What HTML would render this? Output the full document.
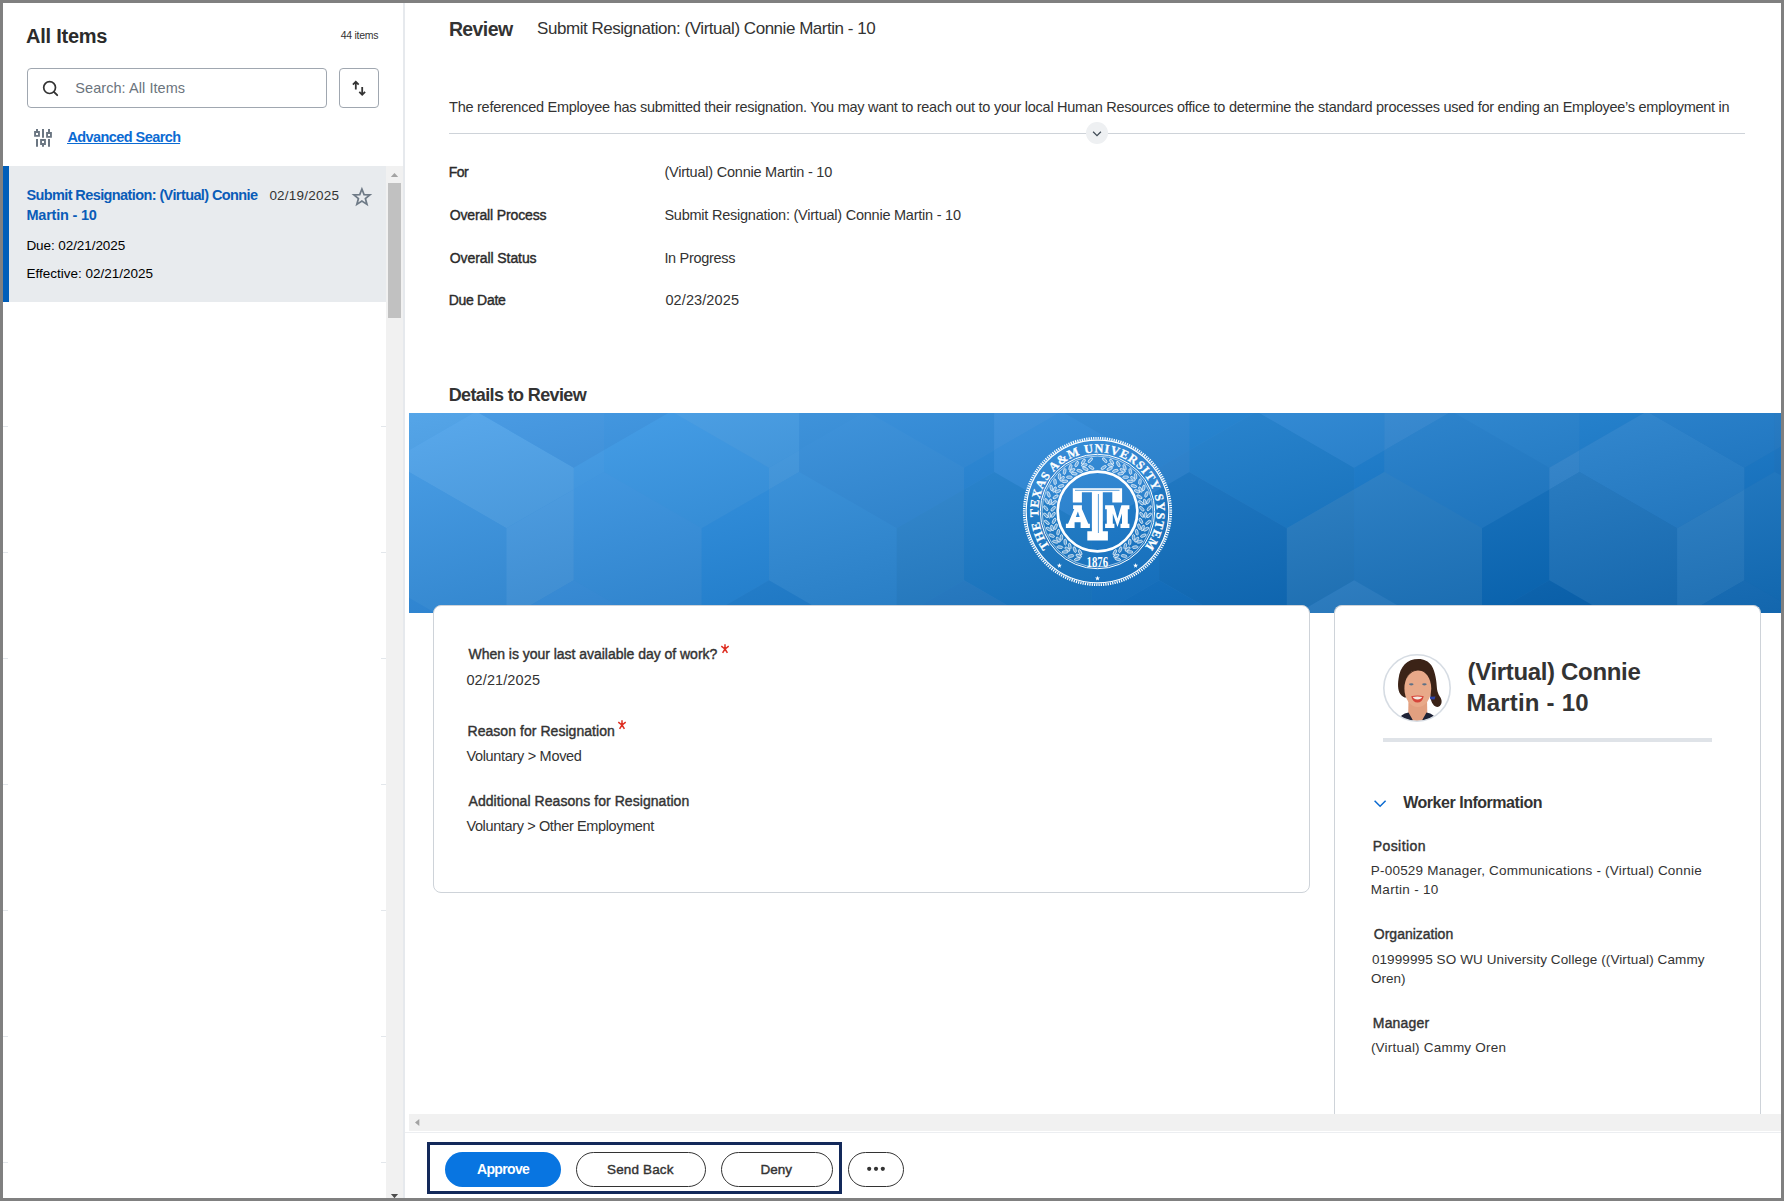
<!DOCTYPE html>
<html><head><meta charset="utf-8"><title>Review</title>
<style>
html,body{margin:0;padding:0}
body{width:1784px;height:1201px;overflow:hidden;background:#808080;position:relative;font-family:"Liberation Sans",sans-serif}
.a{position:absolute}
.t{position:absolute;white-space:nowrap}
</style></head><body>
<div class="a" style="left:3px;top:3px;width:1778px;height:1195px;background:#fff"></div>
<!-- search box -->
<div class="a" style="left:27px;top:68px;width:300px;height:40px;box-sizing:border-box;border:1px solid #a0a7b0;border-radius:4px;background:#fff"></div>
<svg class="a" style="left:40px;top:78px" width="20" height="20" viewBox="0 0 20 20"><circle cx="9.6" cy="9.6" r="5.9" fill="none" stroke="#333" stroke-width="1.7"/><line x1="13.9" y1="13.9" x2="17.2" y2="17.2" stroke="#333" stroke-width="1.9" stroke-linecap="round"/></svg>
<!-- sort button -->
<div class="a" style="left:339px;top:68px;width:40px;height:40px;box-sizing:border-box;border:1px solid #a0a7b0;border-radius:4px;background:#fff"></div>
<svg class="a" style="left:349px;top:78px" width="20" height="20" viewBox="0 0 20 20" fill="none" stroke="#333" stroke-width="1.8" stroke-linecap="butt" stroke-linejoin="miter"><path d="M6.8 3.6 V11.5 M3.9 6.6 L6.8 3.7 L9.7 6.6"/><path d="M13.2 9 V16.9 M10.3 13.9 L13.2 16.8 L16.1 13.9"/></svg>
<!-- advanced search icon -->
<svg class="a" style="left:30px;top:125px" width="28" height="26" viewBox="0 0 28 26" fill="#6b7682"><path d="M6 4h2v2h-2z M4.1 6h5.8v5.8h-5.8z M6 14h2v7.8h-2z M12 4h2v8.8h-2z M10.1 14.1h5.8v5.8h-5.8z M12 19.8h2v2h-2z M18 4h2v3h-2z M16.1 7h5.8v5.8h-5.8z M18 14h2v7.8h-2z"/><path d="M6 8h2v2h-2z M12 16h2v2h-2z M18 9h2v2h-2z" fill="#fff"/></svg>
<div class="a" style="left:67px;top:142.6px;width:113.2px;height:1.4px;background:#0b6bd3"></div>
<!-- selected item -->
<div class="a" style="left:3px;top:166px;width:383px;height:136px;background:#e8ebee"></div>
<div class="a" style="left:3px;top:166px;width:6px;height:136px;background:#005eb9"></div>
<svg class="a" style="left:348px;top:182px" width="28" height="28" viewBox="0 0 28 28"><path transform="translate(13.9 15.1) scale(0.88) translate(-14 -14.5)" d="M14 5.3 L16.45 11.6 L23.2 11.95 L17.95 16.2 L19.75 22.8 L14 19.05 L8.25 22.8 L10.05 16.2 L4.8 11.95 L11.55 11.6 Z" fill="none" stroke="#6e7a86" stroke-width="1.95" stroke-linejoin="miter"/></svg>
<!-- scrollbar -->
<div class="a" style="left:386px;top:166px;width:17px;height:1032px;background:#f1f1f1"></div>
<svg class="a" style="left:386px;top:166px" width="17" height="17"><path d="M4.8 11 L8.5 6.9 L12.2 11 Z" fill="#a3a3a3"/></svg>
<div class="a" style="left:388px;top:183px;width:13px;height:135px;background:#c1c1c1"></div>
<svg class="a" style="left:386px;top:1181px" width="17" height="17"><path d="M4.9 13 L12.1 13 L8.5 17.2 Z" fill="#4d4d4d"/></svg>
<!-- separator -->
<div class="a" style="left:403px;top:3px;width:2px;height:1195px;background:#e6e9ed"></div>

<div class="a" style="left:3px;top:426px;width:5px;height:1px;background:#e3e7eb"></div>
<div class="a" style="left:381px;top:426px;width:5px;height:1px;background:#e3e7eb"></div>
<div class="a" style="left:3px;top:552px;width:5px;height:1px;background:#e3e7eb"></div>
<div class="a" style="left:381px;top:552px;width:5px;height:1px;background:#e3e7eb"></div>
<div class="a" style="left:3px;top:658px;width:5px;height:1px;background:#e3e7eb"></div>
<div class="a" style="left:381px;top:658px;width:5px;height:1px;background:#e3e7eb"></div>
<div class="a" style="left:3px;top:784px;width:5px;height:1px;background:#e3e7eb"></div>
<div class="a" style="left:381px;top:784px;width:5px;height:1px;background:#e3e7eb"></div>
<div class="a" style="left:3px;top:910px;width:5px;height:1px;background:#e3e7eb"></div>
<div class="a" style="left:381px;top:910px;width:5px;height:1px;background:#e3e7eb"></div>
<div class="a" style="left:3px;top:1036px;width:5px;height:1px;background:#e3e7eb"></div>
<div class="a" style="left:381px;top:1036px;width:5px;height:1px;background:#e3e7eb"></div>
<div class="a" style="left:3px;top:1162px;width:5px;height:1px;background:#e3e7eb"></div>
<div class="a" style="left:381px;top:1162px;width:5px;height:1px;background:#e3e7eb"></div>
<div class="a" style="left:449px;top:133px;width:1296px;height:1px;background:#ced3d9"></div>
<div class="a" style="left:1086px;top:122px;width:22px;height:22px;border-radius:50%;background:#eef0f2"></div>
<svg class="a" style="left:1086px;top:122px" width="22" height="22"><path d="M7.1 9.8 L11 13.7 L14.9 9.8" fill="none" stroke="#3f4a55" stroke-width="1.25"/></svg>

<div class="a" style="left:409px;top:413px;width:1372px;height:200px;overflow:hidden;background:linear-gradient(167deg,#58a7e8 0%,#3d90da 30%,#2677c4 60%,#1363ae 100%)">
<svg width="1372" height="200" viewBox="409 413 1372 200" style="position:absolute;left:0;top:0"><defs><linearGradient id="bg0" gradientUnits="userSpaceOnUse" x1="1031.3" y1="257.3" x2="1158.7" y2="768.7"><stop offset="0" stop-color="#4ba0e9"/><stop offset="1" stop-color="#0e61a9"/></linearGradient><linearGradient id="g0" gradientUnits="userSpaceOnUse" x1="1031.3" y1="257.3" x2="1158.7" y2="768.7"><stop offset="0" stop-color="#55a5e8"/><stop offset="1" stop-color="#1865a8"/></linearGradient><linearGradient id="g1" gradientUnits="userSpaceOnUse" x1="1031.3" y1="257.3" x2="1158.7" y2="768.7"><stop offset="0" stop-color="#5aa9ec"/><stop offset="1" stop-color="#1d6aab"/></linearGradient><linearGradient id="g2" gradientUnits="userSpaceOnUse" x1="1031.3" y1="257.3" x2="1158.7" y2="768.7"><stop offset="0" stop-color="#4c9de5"/><stop offset="1" stop-color="#0f5ea5"/></linearGradient><linearGradient id="g3" gradientUnits="userSpaceOnUse" x1="1031.3" y1="257.3" x2="1158.7" y2="768.7"><stop offset="0" stop-color="#4fa4ec"/><stop offset="1" stop-color="#1265ac"/></linearGradient><linearGradient id="g4" gradientUnits="userSpaceOnUse" x1="1031.3" y1="257.3" x2="1158.7" y2="768.7"><stop offset="0" stop-color="#489ce5"/><stop offset="1" stop-color="#0b5da5"/></linearGradient><linearGradient id="g5" gradientUnits="userSpaceOnUse" x1="1031.3" y1="257.3" x2="1158.7" y2="768.7"><stop offset="0" stop-color="#4ba3ec"/><stop offset="1" stop-color="#0e64ac"/></linearGradient><linearGradient id="g6" gradientUnits="userSpaceOnUse" x1="1031.3" y1="257.3" x2="1158.7" y2="768.7"><stop offset="0" stop-color="#53a6eb"/><stop offset="1" stop-color="#1667aa"/></linearGradient><linearGradient id="g7" gradientUnits="userSpaceOnUse" x1="1031.3" y1="257.3" x2="1158.7" y2="768.7"><stop offset="0" stop-color="#55a7eb"/><stop offset="1" stop-color="#1868ab"/></linearGradient><linearGradient id="g8" gradientUnits="userSpaceOnUse" x1="1031.3" y1="257.3" x2="1158.7" y2="768.7"><stop offset="0" stop-color="#4a9ee6"/><stop offset="1" stop-color="#0c5fa6"/></linearGradient><linearGradient id="g9" gradientUnits="userSpaceOnUse" x1="1031.3" y1="257.3" x2="1158.7" y2="768.7"><stop offset="0" stop-color="#4b9fe7"/><stop offset="1" stop-color="#0e60a7"/></linearGradient><linearGradient id="g10" gradientUnits="userSpaceOnUse" x1="1031.3" y1="257.3" x2="1158.7" y2="768.7"><stop offset="0" stop-color="#479de7"/><stop offset="1" stop-color="#0a5ea7"/></linearGradient><linearGradient id="g11" gradientUnits="userSpaceOnUse" x1="1031.3" y1="257.3" x2="1158.7" y2="768.7"><stop offset="0" stop-color="#419be7"/><stop offset="1" stop-color="#045ca7"/></linearGradient><linearGradient id="g12" gradientUnits="userSpaceOnUse" x1="1031.3" y1="257.3" x2="1158.7" y2="768.7"><stop offset="0" stop-color="#52a4ed"/><stop offset="1" stop-color="#1565ad"/></linearGradient><linearGradient id="g13" gradientUnits="userSpaceOnUse" x1="1031.3" y1="257.3" x2="1158.7" y2="768.7"><stop offset="0" stop-color="#4ca2ed"/><stop offset="1" stop-color="#0e63ad"/></linearGradient><linearGradient id="g14" gradientUnits="userSpaceOnUse" x1="1031.3" y1="257.3" x2="1158.7" y2="768.7"><stop offset="0" stop-color="#489ee8"/><stop offset="1" stop-color="#0b5fa8"/></linearGradient><linearGradient id="g15" gradientUnits="userSpaceOnUse" x1="1031.3" y1="257.3" x2="1158.7" y2="768.7"><stop offset="0" stop-color="#499de6"/><stop offset="1" stop-color="#0c5ea6"/></linearGradient><linearGradient id="g16" gradientUnits="userSpaceOnUse" x1="1031.3" y1="257.3" x2="1158.7" y2="768.7"><stop offset="0" stop-color="#3f9ce8"/><stop offset="1" stop-color="#025da7"/></linearGradient><linearGradient id="g17" gradientUnits="userSpaceOnUse" x1="1031.3" y1="257.3" x2="1158.7" y2="768.7"><stop offset="0" stop-color="#409be5"/><stop offset="1" stop-color="#035ca5"/></linearGradient><linearGradient id="g18" gradientUnits="userSpaceOnUse" x1="1031.3" y1="257.3" x2="1158.7" y2="768.7"><stop offset="0" stop-color="#4ba3ed"/><stop offset="1" stop-color="#0e63ac"/></linearGradient><linearGradient id="g19" gradientUnits="userSpaceOnUse" x1="1031.3" y1="257.3" x2="1158.7" y2="768.7"><stop offset="0" stop-color="#409dea"/><stop offset="1" stop-color="#035eaa"/></linearGradient><linearGradient id="g20" gradientUnits="userSpaceOnUse" x1="1031.3" y1="257.3" x2="1158.7" y2="768.7"><stop offset="0" stop-color="#55a7ed"/><stop offset="1" stop-color="#1867ad"/></linearGradient><linearGradient id="g21" gradientUnits="userSpaceOnUse" x1="1031.3" y1="257.3" x2="1158.7" y2="768.7"><stop offset="0" stop-color="#4aa1ea"/><stop offset="1" stop-color="#0d62aa"/></linearGradient><linearGradient id="g22" gradientUnits="userSpaceOnUse" x1="1031.3" y1="257.3" x2="1158.7" y2="768.7"><stop offset="0" stop-color="#4da5ed"/><stop offset="1" stop-color="#1065ad"/></linearGradient><linearGradient id="g23" gradientUnits="userSpaceOnUse" x1="1031.3" y1="257.3" x2="1158.7" y2="768.7"><stop offset="0" stop-color="#5bacf0"/><stop offset="1" stop-color="#1e6cb0"/></linearGradient><linearGradient id="g24" gradientUnits="userSpaceOnUse" x1="1031.3" y1="257.3" x2="1158.7" y2="768.7"><stop offset="0" stop-color="#46a3ee"/><stop offset="1" stop-color="#0963ae"/></linearGradient><linearGradient id="g25" gradientUnits="userSpaceOnUse" x1="1031.3" y1="257.3" x2="1158.7" y2="768.7"><stop offset="0" stop-color="#54aaf1"/><stop offset="1" stop-color="#176ab1"/></linearGradient><linearGradient id="g26" gradientUnits="userSpaceOnUse" x1="1031.3" y1="257.3" x2="1158.7" y2="768.7"><stop offset="0" stop-color="#4da5ef"/><stop offset="1" stop-color="#1065ae"/></linearGradient><linearGradient id="g27" gradientUnits="userSpaceOnUse" x1="1031.3" y1="257.3" x2="1158.7" y2="768.7"><stop offset="0" stop-color="#47a2ee"/><stop offset="1" stop-color="#0a63ae"/></linearGradient><linearGradient id="g28" gradientUnits="userSpaceOnUse" x1="1031.3" y1="257.3" x2="1158.7" y2="768.7"><stop offset="0" stop-color="#4fa3eb"/><stop offset="1" stop-color="#1264ab"/></linearGradient><linearGradient id="g29" gradientUnits="userSpaceOnUse" x1="1031.3" y1="257.3" x2="1158.7" y2="768.7"><stop offset="0" stop-color="#49a0ea"/><stop offset="1" stop-color="#0c61aa"/></linearGradient><linearGradient id="g30" gradientUnits="userSpaceOnUse" x1="1031.3" y1="257.3" x2="1158.7" y2="768.7"><stop offset="0" stop-color="#4da1e9"/><stop offset="1" stop-color="#1062a9"/></linearGradient><linearGradient id="g31" gradientUnits="userSpaceOnUse" x1="1031.3" y1="257.3" x2="1158.7" y2="768.7"><stop offset="0" stop-color="#469ce8"/><stop offset="1" stop-color="#095da8"/></linearGradient><linearGradient id="g32" gradientUnits="userSpaceOnUse" x1="1031.3" y1="257.3" x2="1158.7" y2="768.7"><stop offset="0" stop-color="#59a8ec"/><stop offset="1" stop-color="#1c69ac"/></linearGradient><linearGradient id="g33" gradientUnits="userSpaceOnUse" x1="1031.3" y1="257.3" x2="1158.7" y2="768.7"><stop offset="0" stop-color="#4ea3ec"/><stop offset="1" stop-color="#1164ac"/></linearGradient><linearGradient id="g34" gradientUnits="userSpaceOnUse" x1="1031.3" y1="257.3" x2="1158.7" y2="768.7"><stop offset="0" stop-color="#50a3ed"/><stop offset="1" stop-color="#1364ac"/></linearGradient><linearGradient id="g35" gradientUnits="userSpaceOnUse" x1="1031.3" y1="257.3" x2="1158.7" y2="768.7"><stop offset="0" stop-color="#439fec"/><stop offset="1" stop-color="#0660ac"/></linearGradient><linearGradient id="g36" gradientUnits="userSpaceOnUse" x1="1031.3" y1="257.3" x2="1158.7" y2="768.7"><stop offset="0" stop-color="#4da3eb"/><stop offset="1" stop-color="#1064aa"/></linearGradient><linearGradient id="g37" gradientUnits="userSpaceOnUse" x1="1031.3" y1="257.3" x2="1158.7" y2="768.7"><stop offset="0" stop-color="#409ae6"/><stop offset="1" stop-color="#035ba6"/></linearGradient><linearGradient id="g38" gradientUnits="userSpaceOnUse" x1="1031.3" y1="257.3" x2="1158.7" y2="768.7"><stop offset="0" stop-color="#4a9ee3"/><stop offset="1" stop-color="#0d5fa3"/></linearGradient><linearGradient id="g39" gradientUnits="userSpaceOnUse" x1="1031.3" y1="257.3" x2="1158.7" y2="768.7"><stop offset="0" stop-color="#409ae3"/><stop offset="1" stop-color="#035ba3"/></linearGradient><linearGradient id="g40" gradientUnits="userSpaceOnUse" x1="1031.3" y1="257.3" x2="1158.7" y2="768.7"><stop offset="0" stop-color="#4a9de3"/><stop offset="1" stop-color="#0d5da3"/></linearGradient><linearGradient id="g41" gradientUnits="userSpaceOnUse" x1="1031.3" y1="257.3" x2="1158.7" y2="768.7"><stop offset="0" stop-color="#3f99e6"/><stop offset="1" stop-color="#025aa5"/></linearGradient><linearGradient id="g42" gradientUnits="userSpaceOnUse" x1="1031.3" y1="257.3" x2="1158.7" y2="768.7"><stop offset="0" stop-color="#3d95df"/><stop offset="1" stop-color="#00569f"/></linearGradient><linearGradient id="g43" gradientUnits="userSpaceOnUse" x1="1031.3" y1="257.3" x2="1158.7" y2="768.7"><stop offset="0" stop-color="#3c97e4"/><stop offset="1" stop-color="#0058a4"/></linearGradient><linearGradient id="g44" gradientUnits="userSpaceOnUse" x1="1031.3" y1="257.3" x2="1158.7" y2="768.7"><stop offset="0" stop-color="#4fa1e4"/><stop offset="1" stop-color="#1262a4"/></linearGradient><linearGradient id="g45" gradientUnits="userSpaceOnUse" x1="1031.3" y1="257.3" x2="1158.7" y2="768.7"><stop offset="0" stop-color="#50a3e8"/><stop offset="1" stop-color="#1264a8"/></linearGradient><linearGradient id="g46" gradientUnits="userSpaceOnUse" x1="1031.3" y1="257.3" x2="1158.7" y2="768.7"><stop offset="0" stop-color="#5babee"/><stop offset="1" stop-color="#1e6cae"/></linearGradient><linearGradient id="g47" gradientUnits="userSpaceOnUse" x1="1031.3" y1="257.3" x2="1158.7" y2="768.7"><stop offset="0" stop-color="#3f99e4"/><stop offset="1" stop-color="#025aa4"/></linearGradient><linearGradient id="g48" gradientUnits="userSpaceOnUse" x1="1031.3" y1="257.3" x2="1158.7" y2="768.7"><stop offset="0" stop-color="#50a4e9"/><stop offset="1" stop-color="#1364a9"/></linearGradient><linearGradient id="g49" gradientUnits="userSpaceOnUse" x1="1031.3" y1="257.3" x2="1158.7" y2="768.7"><stop offset="0" stop-color="#4198e1"/><stop offset="1" stop-color="#0358a1"/></linearGradient><linearGradient id="g50" gradientUnits="userSpaceOnUse" x1="1031.3" y1="257.3" x2="1158.7" y2="768.7"><stop offset="0" stop-color="#5cadf1"/><stop offset="1" stop-color="#1e6eb1"/></linearGradient><linearGradient id="g51" gradientUnits="userSpaceOnUse" x1="1031.3" y1="257.3" x2="1158.7" y2="768.7"><stop offset="0" stop-color="#4ea5ee"/><stop offset="1" stop-color="#1166ad"/></linearGradient><linearGradient id="g52" gradientUnits="userSpaceOnUse" x1="1031.3" y1="257.3" x2="1158.7" y2="768.7"><stop offset="0" stop-color="#50a5ed"/><stop offset="1" stop-color="#1366ad"/></linearGradient></defs><rect x="409" y="413" width="1372" height="200" fill="url(#bg0)"/><polygon points="409.0,413.0 409.0,450.2 473.5,413.0" fill="url(#g0)"/><polygon points="573.8,489.4 573.8,467.7 479.1,413.0 473.5,413.0 409.0,450.2 409.0,471.9 506.5,528.2" fill="url(#g1)"/><polygon points="604.0,413.0 479.1,413.0 573.8,467.7 604.0,450.2" fill="url(#g2)"/><polygon points="604.0,471.9 604.0,450.2 573.9,467.7 573.9,489.4" fill="url(#g3)"/><polygon points="604.1,413.0 604.0,450.2 668.6,413.0" fill="url(#g4)"/><polygon points="701.6,528.2 769.0,489.4 769.0,467.7 674.2,413.0 668.6,413.0 604.0,450.2 604.0,471.9" fill="url(#g5)"/><polygon points="799.2,413.0 674.2,413.0 768.9,467.7 799.2,450.2" fill="url(#g6)"/><polygon points="799.2,471.9 799.2,450.2 769.0,467.7 769.0,489.4" fill="url(#g7)"/><polygon points="799.2,413.0 799.2,450.2 863.7,413.0" fill="url(#g8)"/><polygon points="896.7,528.2 964.0,489.4 964.0,467.7 869.3,413.0 863.7,413.0 799.2,450.2 799.2,471.9" fill="url(#g9)"/><polygon points="994.2,413.0 869.3,413.0 964.0,467.7 994.2,450.2" fill="url(#g10)"/><polygon points="994.2,471.9 994.2,450.2 964.0,467.7 964.0,489.4" fill="url(#g11)"/><polygon points="994.2,413.0 994.2,450.2 1058.8,413.0" fill="url(#g12)"/><polygon points="1091.8,528.2 1159.1,489.4 1159.1,467.7 1064.4,413.0 1058.8,413.0 994.2,450.2 994.2,471.9" fill="url(#g13)"/><polygon points="1189.3,413.0 1064.4,413.0 1159.1,467.7 1189.3,450.2" fill="url(#g14)"/><polygon points="1189.3,471.9 1189.3,450.2 1159.1,467.7 1159.1,489.4" fill="url(#g15)"/><polygon points="1189.4,413.0 1189.4,450.2 1253.9,413.0" fill="url(#g16)"/><polygon points="1286.9,528.2 1354.2,489.4 1354.2,467.7 1259.5,413.0 1253.9,413.0 1189.4,450.2 1189.4,471.9" fill="url(#g17)"/><polygon points="1384.5,413.0 1259.5,413.0 1354.2,467.7 1384.5,450.2" fill="url(#g18)"/><polygon points="1384.5,471.9 1384.5,450.2 1354.2,467.7 1354.2,489.4" fill="url(#g19)"/><polygon points="1384.5,413.0 1384.5,450.2 1449.0,413.0" fill="url(#g20)"/><polygon points="1482.0,528.2 1549.3,489.4 1549.3,467.7 1454.6,413.0 1449.0,413.0 1384.5,450.2 1384.5,471.9" fill="url(#g21)"/><polygon points="1579.5,413.0 1454.6,413.0 1549.3,467.7 1579.5,450.2" fill="url(#g22)"/><polygon points="1579.5,471.9 1579.5,450.2 1549.4,467.7 1549.4,489.4" fill="url(#g23)"/><polygon points="1579.5,413.0 1579.5,450.2 1644.1,413.0" fill="url(#g24)"/><polygon points="1677.1,528.2 1744.5,489.4 1744.5,467.7 1649.7,413.0 1644.1,413.0 1579.5,450.2 1579.5,471.9" fill="url(#g25)"/><polygon points="1774.6,413.0 1649.7,413.0 1744.4,467.7 1774.6,450.2" fill="url(#g26)"/><polygon points="1774.6,471.9 1774.6,450.2 1744.5,467.7 1744.5,489.4" fill="url(#g27)"/><polygon points="1781.0,413.0 1774.6,413.0 1774.6,450.2 1781.0,446.6" fill="url(#g28)"/><polygon points="1781.0,475.6 1781.0,446.6 1774.6,450.2 1774.6,471.9" fill="url(#g29)"/><polygon points="409.0,471.9 409.0,597.8 435.4,613.0 506.5,613.0 506.5,528.2" fill="url(#g30)"/><polygon points="409.0,613.0 435.4,613.0 409.0,597.8" fill="url(#g31)"/><polygon points="506.5,528.2 506.5,613.0 517.2,613.0 573.8,580.3 573.8,489.4" fill="url(#g32)"/><polygon points="604.0,471.9 573.9,489.4 573.8,580.3 630.5,613.0 701.6,613.0 701.6,528.2" fill="url(#g33)"/><polygon points="630.5,613.0 573.8,580.3 517.2,613.0" fill="url(#g34)"/><polygon points="701.6,528.2 701.6,613.0 712.3,613.0 769.0,580.3 769.0,489.4" fill="url(#g35)"/><polygon points="799.1,471.9 769.0,489.4 769.0,580.3 825.6,613.0 896.7,613.0 896.7,528.2" fill="url(#g36)"/><polygon points="825.6,613.0 768.9,580.3 712.3,613.0" fill="url(#g37)"/><polygon points="896.7,528.2 896.7,613.0 907.4,613.0 964.0,580.3 964.0,489.4" fill="url(#g38)"/><polygon points="994.2,471.9 964.0,489.4 964.0,580.3 1020.7,613.0 1091.8,613.0 1091.8,528.2" fill="url(#g39)"/><polygon points="1020.7,613.0 964.0,580.3 907.4,613.0" fill="url(#g40)"/><polygon points="1091.8,528.2 1091.8,613.0 1102.5,613.0 1159.1,580.3 1159.1,489.4" fill="url(#g41)"/><polygon points="1189.3,471.9 1159.1,489.4 1159.1,580.3 1215.8,613.0 1286.9,613.0 1286.9,528.2" fill="url(#g42)"/><polygon points="1215.8,613.0 1159.1,580.3 1102.5,613.0" fill="url(#g43)"/><polygon points="1286.9,528.2 1286.9,613.0 1297.6,613.0 1354.2,580.3 1354.2,489.4" fill="url(#g44)"/><polygon points="1384.4,471.9 1354.2,489.4 1354.2,580.3 1410.9,613.0 1482.0,613.0 1482.0,528.2" fill="url(#g45)"/><polygon points="1410.9,613.0 1354.2,580.3 1297.6,613.0" fill="url(#g46)"/><polygon points="1482.0,528.2 1482.0,613.0 1492.7,613.0 1549.3,580.3 1549.3,489.4" fill="url(#g47)"/><polygon points="1579.5,471.9 1549.4,489.4 1549.4,580.3 1606.0,613.0 1677.1,613.0 1677.1,528.2" fill="url(#g48)"/><polygon points="1606.0,613.0 1549.3,580.3 1492.7,613.0" fill="url(#g49)"/><polygon points="1677.1,528.2 1677.1,613.0 1687.8,613.0 1744.5,580.3 1744.5,489.4" fill="url(#g50)"/><polygon points="1744.5,489.4 1744.5,580.3 1781.0,601.4 1781.0,475.6 1774.7,471.9" fill="url(#g51)"/><polygon points="1781.0,613.0 1781.0,601.4 1744.4,580.3 1687.8,613.0" fill="url(#g52)"/></svg>
</div>
<svg class="a" style="left:1017px;top:431px" width="161" height="161" viewBox="1017 431 161 161">
<circle cx="1097.5" cy="511.5" r="73.3" fill="none" stroke="#fff" stroke-width="2.6" stroke-dasharray="1.25 1.05"/>
<circle cx="1097.5" cy="511.5" r="71.3" fill="none" stroke="#fff" stroke-width="1.2"/>
<defs><path id="sealarc" d="M1049.91,546.71 A59.2,59.2 0 1 1 1145.09,546.71"/></defs>
<text font-family="Liberation Serif" font-weight="700" font-size="12.2" fill="#fff" stroke="#fff" stroke-width="0.3" letter-spacing="0"><textPath href="#sealarc" textLength="261.4" lengthAdjust="spacing">THE TEXAS A&amp;M UNIVERSITY SYSTEM</textPath></text>
<circle cx="1097.5" cy="511.5" r="57.2" fill="none" stroke="#fff" stroke-width="1.0"/>
<circle cx="1097.5" cy="511.5" r="55.4" fill="none" stroke="#fff" stroke-width="0.7" opacity="0.85"/>
<g fill="#fff" fill-opacity="0.3" stroke="#fff" stroke-width="0.7" stroke-opacity="0.9"><ellipse cx="1080.15" cy="552.37" rx="3.0" ry="1.3" transform="rotate(243.0 1080.15 552.37)"/><ellipse cx="1078.67" cy="555.87" rx="3.0" ry="1.3" transform="rotate(203.0 1078.67 555.87)"/><ellipse cx="1077.26" cy="559.18" rx="3.0" ry="1.3" transform="rotate(163.0 1077.26 559.18)"/><ellipse cx="1074.74" cy="549.62" rx="3.0" ry="1.3" transform="rotate(250.8 1074.74 549.62)"/><ellipse cx="1070.94" cy="555.97" rx="3.0" ry="1.3" transform="rotate(170.8 1070.94 555.97)"/><ellipse cx="1069.75" cy="546.16" rx="3.0" ry="1.3" transform="rotate(258.7 1069.75 546.16)"/><ellipse cx="1067.37" cy="549.13" rx="3.0" ry="1.3" transform="rotate(218.7 1067.37 549.13)"/><ellipse cx="1065.12" cy="551.94" rx="3.0" ry="1.3" transform="rotate(178.7 1065.12 551.94)"/><ellipse cx="1065.28" cy="542.05" rx="3.0" ry="1.3" transform="rotate(266.5 1065.28 542.05)"/><ellipse cx="1059.91" cy="547.14" rx="3.0" ry="1.3" transform="rotate(186.5 1059.91 547.14)"/><ellipse cx="1061.41" cy="537.37" rx="3.0" ry="1.3" transform="rotate(274.4 1061.41 537.37)"/><ellipse cx="1058.32" cy="539.58" rx="3.0" ry="1.3" transform="rotate(234.4 1058.32 539.58)"/><ellipse cx="1055.40" cy="541.68" rx="3.0" ry="1.3" transform="rotate(194.4 1055.40 541.68)"/><ellipse cx="1058.22" cy="532.20" rx="3.0" ry="1.3" transform="rotate(282.2 1058.22 532.20)"/><ellipse cx="1051.67" cy="535.65" rx="3.0" ry="1.3" transform="rotate(202.2 1051.67 535.65)"/><ellipse cx="1055.76" cy="526.65" rx="3.0" ry="1.3" transform="rotate(290.1 1055.76 526.65)"/><ellipse cx="1052.19" cy="527.94" rx="3.0" ry="1.3" transform="rotate(250.1 1052.19 527.94)"/><ellipse cx="1048.81" cy="529.17" rx="3.0" ry="1.3" transform="rotate(210.1 1048.81 529.17)"/><ellipse cx="1054.09" cy="520.81" rx="3.0" ry="1.3" transform="rotate(297.9 1054.09 520.81)"/><ellipse cx="1046.85" cy="522.36" rx="3.0" ry="1.3" transform="rotate(217.9 1046.85 522.36)"/><ellipse cx="1053.22" cy="514.80" rx="3.0" ry="1.3" transform="rotate(305.7 1053.22 514.80)"/><ellipse cx="1049.43" cy="515.08" rx="3.0" ry="1.3" transform="rotate(265.7 1049.43 515.08)"/><ellipse cx="1045.84" cy="515.35" rx="3.0" ry="1.3" transform="rotate(225.7 1045.84 515.35)"/><ellipse cx="1053.19" cy="508.73" rx="3.0" ry="1.3" transform="rotate(313.6 1053.19 508.73)"/><ellipse cx="1045.80" cy="508.27" rx="3.0" ry="1.3" transform="rotate(233.6 1045.80 508.27)"/><ellipse cx="1053.98" cy="502.71" rx="3.0" ry="1.3" transform="rotate(321.4 1053.98 502.71)"/><ellipse cx="1050.25" cy="501.96" rx="3.0" ry="1.3" transform="rotate(281.4 1050.25 501.96)"/><ellipse cx="1046.73" cy="501.24" rx="3.0" ry="1.3" transform="rotate(241.4 1046.73 501.24)"/><ellipse cx="1055.59" cy="496.85" rx="3.0" ry="1.3" transform="rotate(329.3 1055.59 496.85)"/><ellipse cx="1048.60" cy="494.41" rx="3.0" ry="1.3" transform="rotate(249.3 1048.60 494.41)"/><ellipse cx="1057.98" cy="491.27" rx="3.0" ry="1.3" transform="rotate(337.1 1057.98 491.27)"/><ellipse cx="1054.59" cy="489.54" rx="3.0" ry="1.3" transform="rotate(297.1 1054.59 489.54)"/><ellipse cx="1051.39" cy="487.90" rx="3.0" ry="1.3" transform="rotate(257.1 1051.39 487.90)"/><ellipse cx="1061.11" cy="486.07" rx="3.0" ry="1.3" transform="rotate(344.9 1061.11 486.07)"/><ellipse cx="1055.04" cy="481.83" rx="3.0" ry="1.3" transform="rotate(264.9 1055.04 481.83)"/><ellipse cx="1064.92" cy="481.34" rx="3.0" ry="1.3" transform="rotate(352.8 1064.92 481.34)"/><ellipse cx="1062.13" cy="478.76" rx="3.0" ry="1.3" transform="rotate(312.8 1062.13 478.76)"/><ellipse cx="1059.49" cy="476.31" rx="3.0" ry="1.3" transform="rotate(272.8 1059.49 476.31)"/><ellipse cx="1069.34" cy="477.18" rx="3.0" ry="1.3" transform="rotate(360.6 1069.34 477.18)"/><ellipse cx="1064.64" cy="471.45" rx="3.0" ry="1.3" transform="rotate(280.6 1064.64 471.45)"/><ellipse cx="1074.28" cy="473.65" rx="3.0" ry="1.3" transform="rotate(368.5 1074.28 473.65)"/><ellipse cx="1072.30" cy="470.41" rx="3.0" ry="1.3" transform="rotate(328.5 1072.30 470.41)"/><ellipse cx="1070.41" cy="467.35" rx="3.0" ry="1.3" transform="rotate(288.5 1070.41 467.35)"/><ellipse cx="1079.66" cy="470.84" rx="3.0" ry="1.3" transform="rotate(376.3 1079.66 470.84)"/><ellipse cx="1076.69" cy="464.06" rx="3.0" ry="1.3" transform="rotate(296.3 1076.69 464.06)"/><ellipse cx="1085.38" cy="468.79" rx="3.0" ry="1.3" transform="rotate(384.2 1085.38 468.79)"/><ellipse cx="1084.34" cy="465.13" rx="3.0" ry="1.3" transform="rotate(344.2 1084.34 465.13)"/><ellipse cx="1083.36" cy="461.67" rx="3.0" ry="1.3" transform="rotate(304.2 1083.36 461.67)"/><ellipse cx="1091.32" cy="467.53" rx="3.0" ry="1.3" transform="rotate(392.0 1091.32 467.53)"/><ellipse cx="1090.29" cy="460.20" rx="3.0" ry="1.3" transform="rotate(312.0 1090.29 460.20)"/><ellipse cx="1114.85" cy="552.37" rx="3.0" ry="1.3" transform="rotate(117.0 1114.85 552.37)"/><ellipse cx="1116.33" cy="555.87" rx="3.0" ry="1.3" transform="rotate(157.0 1116.33 555.87)"/><ellipse cx="1117.74" cy="559.18" rx="3.0" ry="1.3" transform="rotate(197.0 1117.74 559.18)"/><ellipse cx="1120.26" cy="549.62" rx="3.0" ry="1.3" transform="rotate(109.2 1120.26 549.62)"/><ellipse cx="1124.06" cy="555.97" rx="3.0" ry="1.3" transform="rotate(189.2 1124.06 555.97)"/><ellipse cx="1125.25" cy="546.16" rx="3.0" ry="1.3" transform="rotate(101.3 1125.25 546.16)"/><ellipse cx="1127.63" cy="549.13" rx="3.0" ry="1.3" transform="rotate(141.3 1127.63 549.13)"/><ellipse cx="1129.88" cy="551.94" rx="3.0" ry="1.3" transform="rotate(181.3 1129.88 551.94)"/><ellipse cx="1129.72" cy="542.05" rx="3.0" ry="1.3" transform="rotate(93.5 1129.72 542.05)"/><ellipse cx="1135.09" cy="547.14" rx="3.0" ry="1.3" transform="rotate(173.5 1135.09 547.14)"/><ellipse cx="1133.59" cy="537.37" rx="3.0" ry="1.3" transform="rotate(85.6 1133.59 537.37)"/><ellipse cx="1136.68" cy="539.58" rx="3.0" ry="1.3" transform="rotate(125.6 1136.68 539.58)"/><ellipse cx="1139.60" cy="541.68" rx="3.0" ry="1.3" transform="rotate(165.6 1139.60 541.68)"/><ellipse cx="1136.78" cy="532.20" rx="3.0" ry="1.3" transform="rotate(77.8 1136.78 532.20)"/><ellipse cx="1143.33" cy="535.65" rx="3.0" ry="1.3" transform="rotate(157.8 1143.33 535.65)"/><ellipse cx="1139.24" cy="526.65" rx="3.0" ry="1.3" transform="rotate(69.9 1139.24 526.65)"/><ellipse cx="1142.81" cy="527.94" rx="3.0" ry="1.3" transform="rotate(109.9 1142.81 527.94)"/><ellipse cx="1146.19" cy="529.17" rx="3.0" ry="1.3" transform="rotate(149.9 1146.19 529.17)"/><ellipse cx="1140.91" cy="520.81" rx="3.0" ry="1.3" transform="rotate(62.1 1140.91 520.81)"/><ellipse cx="1148.15" cy="522.36" rx="3.0" ry="1.3" transform="rotate(142.1 1148.15 522.36)"/><ellipse cx="1141.78" cy="514.80" rx="3.0" ry="1.3" transform="rotate(54.3 1141.78 514.80)"/><ellipse cx="1145.57" cy="515.08" rx="3.0" ry="1.3" transform="rotate(94.3 1145.57 515.08)"/><ellipse cx="1149.16" cy="515.35" rx="3.0" ry="1.3" transform="rotate(134.3 1149.16 515.35)"/><ellipse cx="1141.81" cy="508.73" rx="3.0" ry="1.3" transform="rotate(46.4 1141.81 508.73)"/><ellipse cx="1149.20" cy="508.27" rx="3.0" ry="1.3" transform="rotate(126.4 1149.20 508.27)"/><ellipse cx="1141.02" cy="502.71" rx="3.0" ry="1.3" transform="rotate(38.6 1141.02 502.71)"/><ellipse cx="1144.75" cy="501.96" rx="3.0" ry="1.3" transform="rotate(78.6 1144.75 501.96)"/><ellipse cx="1148.27" cy="501.24" rx="3.0" ry="1.3" transform="rotate(118.6 1148.27 501.24)"/><ellipse cx="1139.41" cy="496.85" rx="3.0" ry="1.3" transform="rotate(30.7 1139.41 496.85)"/><ellipse cx="1146.40" cy="494.41" rx="3.0" ry="1.3" transform="rotate(110.7 1146.40 494.41)"/><ellipse cx="1137.02" cy="491.27" rx="3.0" ry="1.3" transform="rotate(22.9 1137.02 491.27)"/><ellipse cx="1140.41" cy="489.54" rx="3.0" ry="1.3" transform="rotate(62.9 1140.41 489.54)"/><ellipse cx="1143.61" cy="487.90" rx="3.0" ry="1.3" transform="rotate(102.9 1143.61 487.90)"/><ellipse cx="1133.89" cy="486.07" rx="3.0" ry="1.3" transform="rotate(15.1 1133.89 486.07)"/><ellipse cx="1139.96" cy="481.83" rx="3.0" ry="1.3" transform="rotate(95.1 1139.96 481.83)"/><ellipse cx="1130.08" cy="481.34" rx="3.0" ry="1.3" transform="rotate(7.2 1130.08 481.34)"/><ellipse cx="1132.87" cy="478.76" rx="3.0" ry="1.3" transform="rotate(47.2 1132.87 478.76)"/><ellipse cx="1135.51" cy="476.31" rx="3.0" ry="1.3" transform="rotate(87.2 1135.51 476.31)"/><ellipse cx="1125.66" cy="477.18" rx="3.0" ry="1.3" transform="rotate(-0.6 1125.66 477.18)"/><ellipse cx="1130.36" cy="471.45" rx="3.0" ry="1.3" transform="rotate(79.4 1130.36 471.45)"/><ellipse cx="1120.72" cy="473.65" rx="3.0" ry="1.3" transform="rotate(-8.5 1120.72 473.65)"/><ellipse cx="1122.70" cy="470.41" rx="3.0" ry="1.3" transform="rotate(31.5 1122.70 470.41)"/><ellipse cx="1124.59" cy="467.35" rx="3.0" ry="1.3" transform="rotate(71.5 1124.59 467.35)"/><ellipse cx="1115.34" cy="470.84" rx="3.0" ry="1.3" transform="rotate(-16.3 1115.34 470.84)"/><ellipse cx="1118.31" cy="464.06" rx="3.0" ry="1.3" transform="rotate(63.7 1118.31 464.06)"/><ellipse cx="1109.62" cy="468.79" rx="3.0" ry="1.3" transform="rotate(-24.2 1109.62 468.79)"/><ellipse cx="1110.66" cy="465.13" rx="3.0" ry="1.3" transform="rotate(15.8 1110.66 465.13)"/><ellipse cx="1111.64" cy="461.67" rx="3.0" ry="1.3" transform="rotate(55.8 1111.64 461.67)"/><ellipse cx="1103.68" cy="467.53" rx="3.0" ry="1.3" transform="rotate(-32.0 1103.68 467.53)"/><ellipse cx="1104.71" cy="460.20" rx="3.0" ry="1.3" transform="rotate(48.0 1104.71 460.20)"/></g>
<circle cx="1097.5" cy="511.5" r="39.8" fill="none" stroke="#fff" stroke-width="2.7"/>
<g fill="#fff">
<path d="M1072.8,488.2 H1122.1 V502.6 H1112.3 V492.3 H1102.8 V531.3 H1107.9 V540.5 H1087.3 V531.3 H1091.9 V492.3 H1081.9 V502.6 H1072.8 Z"/>
<path d="M1065.9,527.9 H1074.6 V522.2 H1080.6 V527.9 H1089.9 V523.8 H1088.3 L1081.9,509 V505.2 H1073.1 V509 H1074.3 L1068,523.8 H1065.9 Z"/>
<path d="M1105.1,505.2 H1113.6 L1117.5,518.5 L1121.4,505.2 H1129.4 V509.3 H1127.8 V523.8 H1129.4 V527.9 H1120.5 V523.8 H1122 V513.5 L1117.5,527 L1112.8,513.5 V523.8 H1114.4 V527.9 H1105.1 V523.8 H1106.8 V509.3 H1105.1 Z"/>
</g>
<path d="M1075.8,517 L1077.9,511.4 L1079.7,517 Z" fill="#2f86d2"/>
<g fill="none" stroke="#2f86d2" stroke-width="0.8"><path d="M1075,490.3 H1119.5"/><path d="M1098.4,494 V533"/></g>
<text x="1097.3" y="566.8" text-anchor="middle" font-family="Liberation Serif" font-weight="700" font-size="14" fill="#fff" textLength="21.5" lengthAdjust="spacingAndGlyphs">1876</text>
<polygon points="1059.40,563.00 1060.04,564.72 1061.87,564.80 1060.44,565.94 1060.93,567.70 1059.40,566.69 1057.87,567.70 1058.36,565.94 1056.93,564.80 1058.76,564.72" fill="#fff"/>
<polygon points="1135.60,563.00 1136.24,564.72 1138.07,564.80 1136.64,565.94 1137.13,567.70 1135.60,566.69 1134.07,567.70 1134.56,565.94 1133.13,564.80 1134.96,564.72" fill="#fff"/>
<polygon points="1097.50,575.70 1098.14,577.42 1099.97,577.50 1098.54,578.64 1099.03,580.40 1097.50,579.39 1095.97,580.40 1096.46,578.64 1095.03,577.50 1096.86,577.42" fill="#fff"/>
</svg>
<div class="a" style="left:433px;top:605px;width:877px;height:288px;box-sizing:border-box;border:1px solid #ced3d9;border-radius:8px;background:#fff"></div>
<div class="a" style="left:1334px;top:605px;width:427px;height:509px;box-sizing:border-box;border:1px solid #ced3d9;border-bottom:none;border-radius:8px 8px 0 0;background:#fff"></div>
<!-- asterisks -->
<svg class="a" style="left:719px;top:643px" width="12" height="12"><path d="M6 1.2 V6.2 M2.3 3.2 L6 6 L9.7 3.2 M3.6 9.8 L6 6 L8.4 9.8" fill="none" stroke="#de2e21" stroke-width="1.5"/></svg>
<svg class="a" style="left:616px;top:719px" width="12" height="12"><path d="M6 1.2 V6.2 M2.3 3.2 L6 6 L9.7 3.2 M3.6 9.8 L6 6 L8.4 9.8" fill="none" stroke="#de2e21" stroke-width="1.5"/></svg>
<!-- avatar -->
<svg class="a" style="left:1382px;top:653px" width="70" height="70" viewBox="0 0 70 70">
 <defs><clipPath id="avc"><circle cx="35" cy="35" r="33"/></clipPath></defs>
 <circle cx="35" cy="35" r="33.2" fill="#fff"/>
 <g clip-path="url(#avc)">
  <path d="M36.5 6 C25 6 18 13.5 16.5 26 C15.5 33 16 39 19.5 42.5 C21 44 23 44.8 24.5 44.5 L25 31 C27 22 44 21 47.5 31 L48.5 45 C49.5 50.5 52.5 54.5 56.5 53.8 C60.5 52 60.5 46.5 57.5 43 C56.5 41.5 55.5 39 55 36 C54.5 28 53.5 19 49.5 12.5 C46.5 8.2 42 6 36.5 6 Z" fill="#3b2317"/>
  <path d="M26.5 46 L26 70 L45.5 70 L45 46 Z" fill="#e2a080"/>
  <path d="M17 70 L19.5 62.5 Q22.5 60 26.5 59.6 L30.5 66.5 L31 70 Z M54 70 L51.5 62.5 Q48.5 60 44.5 59.6 L40.5 66.5 L40 70 Z" fill="#1f2336"/>
  <ellipse cx="35.8" cy="35.5" rx="13.4" ry="18.6" fill="#e8a989"/>
  <path d="M24.5 27 C26 20.5 31 16.5 36.2 16.2 C41.5 16.5 46.5 20.5 47.8 27 C46.5 21.5 42 17.8 36.5 17.6 L36 17.6 C30.5 17.8 26 21.5 24.5 27 Z" fill="#3b2317"/>
  <ellipse cx="29.3" cy="31.3" rx="2.3" ry="1.15" fill="#5e7186"/>
  <ellipse cx="42.4" cy="31.3" rx="2.3" ry="1.15" fill="#5e7186"/>
  <path d="M29.2 43.2 Q35.5 41.6 41.8 43.2 Q40.2 49.4 35.5 49.6 Q30.8 49.4 29.2 43.2 Z" fill="#d6463b"/>
  <path d="M30.8 44 Q35.5 43.2 40.2 44 Q39.2 46.4 35.5 46.6 Q31.8 46.4 30.8 44 Z" fill="#f5ebe2"/>
  <path d="M48 43.8 L53.5 43.6 L52.5 46.4 L48.2 46.2 Z" fill="#2b42a8"/>
 </g>
 <circle cx="35" cy="35" r="33.2" fill="none" stroke="#d6dce3" stroke-width="1.6"/>
</svg>
<div class="a" style="left:1383px;top:738px;width:329px;height:4px;background:#dfe3e8"></div>
<svg class="a" style="left:1370px;top:795px" width="20" height="18"><path d="M4.6 5.8 L10.1 11.3 L15.6 5.8" fill="none" stroke="#0b6ad0" stroke-width="1.5"/></svg>

<!-- horizontal scrollbar -->
<div class="a" style="left:409px;top:1114px;width:1372px;height:17px;background:#f1f1f1"></div>
<svg class="a" style="left:409px;top:1114px" width="17" height="17"><path d="M10.3 5 L6 8.5 L10.3 12 Z" fill="#a3a3a3"/></svg>
<div class="a" style="left:405px;top:1132px;width:1376px;height:1px;background:#eceef1"></div>
<!-- action bar -->
<div class="a" style="left:427px;top:1142px;width:415px;height:52px;box-sizing:border-box;border:3px solid #13295a"></div>
<div class="a" style="left:445px;top:1152px;width:116px;height:35px;border-radius:18px;background:#0875e1"></div>
<div class="a" style="left:576px;top:1152px;width:130px;height:35px;box-sizing:border-box;border:1px solid #333;border-radius:18px;background:#fff"></div>
<div class="a" style="left:721px;top:1152px;width:112px;height:35px;box-sizing:border-box;border:1px solid #333;border-radius:18px;background:#fff"></div>
<div class="a" style="left:848px;top:1152px;width:56px;height:35px;box-sizing:border-box;border:1px solid #333;border-radius:18px;background:#fff"></div>
<svg class="a" style="left:848px;top:1152px" width="56" height="35" fill="#333"><circle cx="21.2" cy="16.8" r="2.1"/><circle cx="28" cy="16.8" r="2.1"/><circle cx="34.8" cy="16.8" r="2.1"/></svg>

<div class="t" id="t_allitems" style="left:26.10px;top:23.57px;font-size:20px;line-height:25px;font-weight:700;color:#2b2b2b;letter-spacing:-0.250px">All Items</div>
<div class="t" id="t_count" style="left:340.80px;top:28.86px;font-size:10.5px;line-height:13px;font-weight:400;color:#333;letter-spacing:-0.286px">44 items</div>
<div class="t" id="t_search" style="left:75.30px;top:79.08px;font-size:14.5px;line-height:18px;font-weight:400;color:#6b747d;letter-spacing:0.063px">Search: All Items</div>
<div class="t" id="t_adv" style="left:67.40px;top:127.88px;font-size:14.5px;line-height:18px;font-weight:700;color:#0b6bd3;letter-spacing:-0.571px">Advanced Search</div>
<div class="t" id="t_it1" style="left:26.40px;top:185.78px;font-size:14.5px;line-height:18px;font-weight:700;color:#0a5cb8;letter-spacing:-0.600px">Submit Resignation: (Virtual) Connie</div>
<div class="t" id="t_it2" style="left:26.40px;top:205.98px;font-size:14.5px;line-height:18px;font-weight:700;color:#0a5cb8;letter-spacing:-0.200px">Martin - 10</div>
<div class="t" id="t_itdate" style="left:269.40px;top:186.82px;font-size:13.5px;line-height:17px;font-weight:400;color:#333;letter-spacing:0.222px">02/19/2025</div>
<div class="t" id="t_due" style="left:26.40px;top:236.82px;font-size:13.5px;line-height:17px;font-weight:400;color:#000;letter-spacing:-0.071px">Due: 02/21/2025</div>
<div class="t" id="t_eff" style="left:26.40px;top:264.82px;font-size:13.5px;line-height:17px;font-weight:400;color:#000">Effective: 02/21/2025</div>
<div class="t" id="t_review" style="left:448.90px;top:17.04px;font-size:19.5px;line-height:24px;font-weight:700;color:#333;letter-spacing:-0.600px">Review</div>
<div class="t" id="t_subtitle" style="left:537.10px;top:17.61px;font-size:17px;line-height:21px;font-weight:400;color:#333;letter-spacing:-0.468px">Submit Resignation: (Virtual) Connie Martin - 10</div>
<div class="t" id="t_desc" style="left:449.10px;top:97.88px;font-size:14.5px;line-height:18px;font-weight:400;color:#333;letter-spacing:-0.263px">The referenced Employee has submitted their resignation. You may want to reach out to your local Human Resources office to determine the standard processes used for ending an Employee’s employment in</div>
<div class="t" id="t_l_for" style="left:448.70px;top:163.15px;font-size:14px;line-height:18px;font-weight:400;color:#2b2b2b;-webkit-text-stroke:0.4px #2b2b2b;letter-spacing:-0.500px">For</div>
<div class="t" id="t_l_proc" style="left:449.70px;top:205.85px;font-size:14px;line-height:18px;font-weight:400;color:#2b2b2b;-webkit-text-stroke:0.4px #2b2b2b;letter-spacing:-0.143px">Overall Process</div>
<div class="t" id="t_l_stat" style="left:449.70px;top:248.85px;font-size:14px;line-height:18px;font-weight:400;color:#2b2b2b;-webkit-text-stroke:0.4px #2b2b2b;letter-spacing:-0.077px">Overall Status</div>
<div class="t" id="t_l_due" style="left:448.70px;top:291.15px;font-size:14px;line-height:18px;font-weight:400;color:#2b2b2b;-webkit-text-stroke:0.4px #2b2b2b;letter-spacing:-0.286px">Due Date</div>
<div class="t" id="t_v_for" style="left:664.40px;top:162.98px;font-size:14.5px;line-height:18px;font-weight:400;color:#333;letter-spacing:-0.222px">(Virtual) Connie Martin - 10</div>
<div class="t" id="t_v_proc" style="left:664.40px;top:205.68px;font-size:14.5px;line-height:18px;font-weight:400;color:#333;letter-spacing:-0.234px">Submit Resignation: (Virtual) Connie Martin - 10</div>
<div class="t" id="t_v_stat" style="left:664.40px;top:248.68px;font-size:14.5px;line-height:18px;font-weight:400;color:#333;letter-spacing:-0.300px">In Progress</div>
<div class="t" id="t_v_due" style="left:665.40px;top:290.98px;font-size:14.5px;line-height:18px;font-weight:400;color:#333;letter-spacing:0.111px">02/23/2025</div>
<div class="t" id="t_details" style="left:448.70px;top:383.76px;font-size:18px;line-height:22px;font-weight:700;color:#333;letter-spacing:-0.625px">Details to Review</div>
<div class="t" id="t_q1" style="left:468.50px;top:645.15px;font-size:14px;line-height:18px;font-weight:400;color:#333;-webkit-text-stroke:0.4px #333;letter-spacing:-0.026px">When is your last available day of work?</div>
<div class="t" id="t_a1" style="left:466.40px;top:671.08px;font-size:14.5px;line-height:18px;font-weight:400;color:#333;letter-spacing:0.111px">02/21/2025</div>
<div class="t" id="t_q2" style="left:467.50px;top:722.25px;font-size:14px;line-height:18px;font-weight:400;color:#333;-webkit-text-stroke:0.4px #333;letter-spacing:0.048px">Reason for Resignation</div>
<div class="t" id="t_a2" style="left:466.40px;top:746.78px;font-size:14.5px;line-height:18px;font-weight:400;color:#333;letter-spacing:-0.313px">Voluntary &gt; Moved</div>
<div class="t" id="t_q3" style="left:468.50px;top:792.35px;font-size:14px;line-height:18px;font-weight:400;color:#333;-webkit-text-stroke:0.4px #333;letter-spacing:0.061px">Additional Reasons for Resignation</div>
<div class="t" id="t_a3" style="left:466.40px;top:816.68px;font-size:14.5px;line-height:18px;font-weight:400;color:#333;letter-spacing:-0.370px">Voluntary &gt; Other Employment</div>
<div class="t" id="t_name1" style="left:1467.50px;top:656.68px;font-size:24px;line-height:30px;font-weight:700;color:#333;letter-spacing:-0.333px">(Virtual) Connie</div>
<div class="t" id="t_name2" style="left:1466.50px;top:688.38px;font-size:24px;line-height:30px;font-weight:700;color:#333;letter-spacing:0.200px">Martin - 10</div>
<div class="t" id="t_winfo" style="left:1403.20px;top:793.26px;font-size:16px;line-height:20px;font-weight:700;color:#333;letter-spacing:-0.471px">Worker Information</div>
<div class="t" id="t_pos" style="left:1372.70px;top:836.75px;font-size:14px;line-height:18px;font-weight:400;color:#333;-webkit-text-stroke:0.4px #333;letter-spacing:0.429px">Position</div>
<div class="t" id="t_posv1" style="left:1370.80px;top:862.02px;font-size:13.5px;line-height:17px;font-weight:400;color:#333;letter-spacing:0.204px">P-00529 Manager, Communications - (Virtual) Connie</div>
<div class="t" id="t_posv2" style="left:1370.80px;top:881.12px;font-size:13.5px;line-height:17px;font-weight:400;color:#333;letter-spacing:0.300px">Martin - 10</div>
<div class="t" id="t_org" style="left:1373.80px;top:924.75px;font-size:14px;line-height:18px;font-weight:400;color:#333;-webkit-text-stroke:0.4px #333">Organization</div>
<div class="t" id="t_orgv1" style="left:1371.90px;top:950.52px;font-size:13.5px;line-height:17px;font-weight:400;color:#333;letter-spacing:0.102px">01999995 SO WU University College ((Virtual) Cammy</div>
<div class="t" id="t_orgv2" style="left:1370.90px;top:969.72px;font-size:13.5px;line-height:17px;font-weight:400;color:#333">Oren)</div>
<div class="t" id="t_mgr" style="left:1372.80px;top:1013.95px;font-size:14px;line-height:18px;font-weight:400;color:#333;-webkit-text-stroke:0.4px #333;letter-spacing:0.167px">Manager</div>
<div class="t" id="t_mgrv" style="left:1370.90px;top:1038.52px;font-size:13.5px;line-height:17px;font-weight:400;color:#333;letter-spacing:0.211px">(Virtual) Cammy Oren</div>
<div class="t" id="t_approve" style="left:477.00px;top:1159.95px;font-size:14px;line-height:18px;font-weight:700;color:#fff;letter-spacing:-0.667px">Approve</div>
<div class="t" id="t_sendback" style="left:607.10px;top:1160.82px;font-size:13.5px;line-height:17px;font-weight:400;color:#333;-webkit-text-stroke:0.4px #333;letter-spacing:0.125px">Send Back</div>
<div class="t" id="t_deny" style="left:760.50px;top:1160.82px;font-size:13.5px;line-height:17px;font-weight:400;color:#333;-webkit-text-stroke:0.4px #333">Deny</div>
</body></html>
